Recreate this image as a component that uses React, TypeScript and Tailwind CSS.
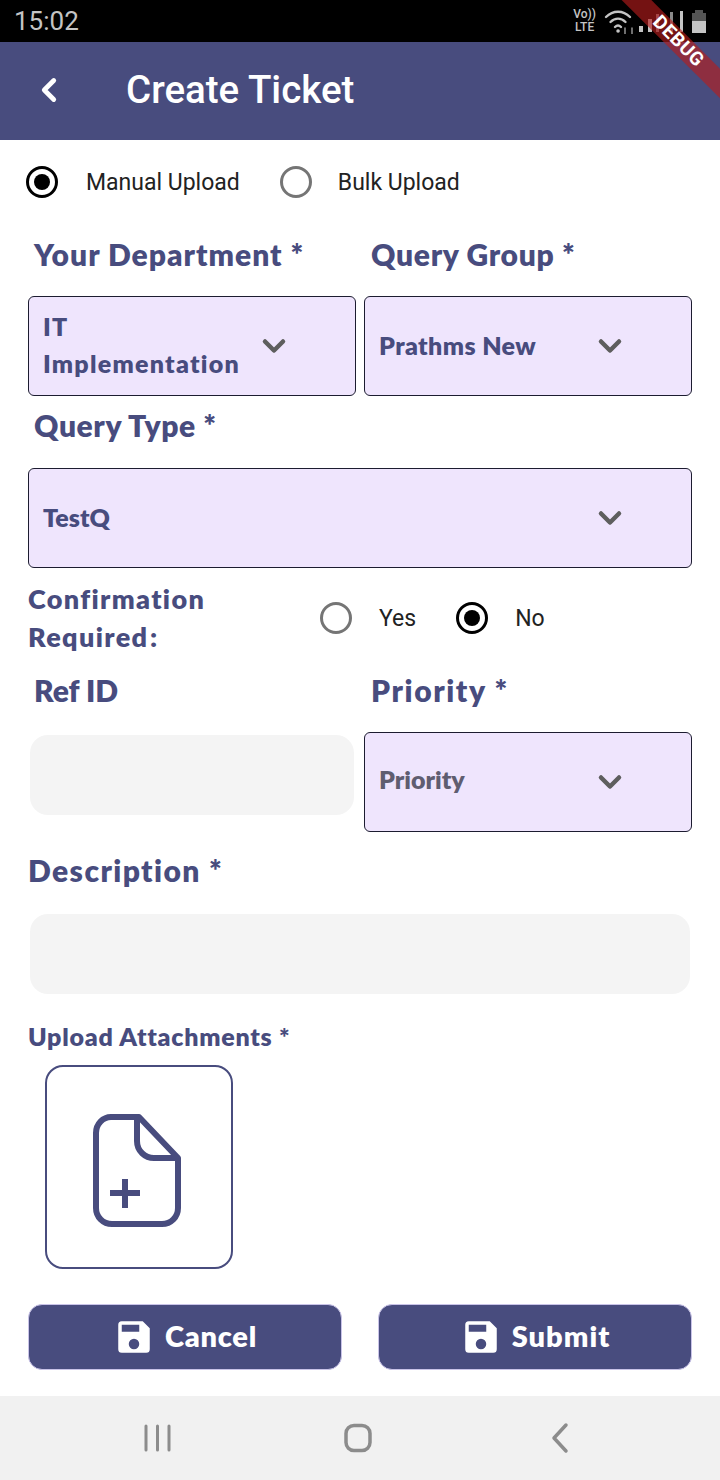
import { ChevronDown, ChevronLeft } from "lucide-react";

const brand = "#484c7e";

function Radio({ on }: { on?: boolean }) {
  return (
    <span
      className={`flex h-[32px] w-[32px] items-center justify-center rounded-full border-[3.5px] ${
        on ? "border-black" : "border-[#757575]"
      }`}
    >
      {on && <span className="h-[16px] w-[16px] rounded-full bg-black" />}
    </span>
  );
}

function Label({ text, className }: { text: string; className?: string }) {
  return <div className={`font-['Lato'] font-extrabold text-[#484c7e] ${className}`}>{text}</div>;
}

function Dropdown({
  lines,
  wide,
  muted,
  spacing,
}: {
  lines: string[];
  wide?: boolean;
  muted?: boolean;
  spacing?: string;
}) {
  return (
    <div
      className={`flex h-[100px] items-center rounded-[6px] border border-[#1c1c30] bg-[#efe5fd] pb-[2px] pl-[14px] pr-[65px] ${
        wide ? "w-[664px]" : "w-[328px]"
      }`}
    >
      <div
        className={`flex-1 font-['Lato'] text-[25px] font-extrabold leading-[37px] ${spacing} ${
          muted ? "mb-[3px] text-[#5f5d70]" : "text-[#484c7e]"
        }`}
      >
        {lines.map((l) => (
          <div key={l}>{l}</div>
        ))}
      </div>
      <ChevronDown className="mt-[2px] -mr-[2px] text-[#5e5e5e]" size={36} strokeWidth={3} />
    </div>
  );
}

function SaveIcon() {
  return (
    <svg width="42" height="42" viewBox="0 0 24 24" fill="#fff">
      <path d="M17 3H5a2 2 0 0 0-2 2v14a2 2 0 0 0 2 2h14a2 2 0 0 0 2-2V7l-4-4zm-5 16a3 3 0 1 1 0-6 3 3 0 0 1 0 6zm3-10H5V5h10v4z" />
    </svg>
  );
}

function ActionButton({ text, spacing }: { text: string; spacing: string }) {
  return (
    <button className="flex h-[66px] w-[314px] items-center justify-center gap-[10px] rounded-[14px] border border-[#c9c3e8] bg-[#484c7e]">
      <SaveIcon />
      <span className={`mb-[2px] font-['Lato'] text-[29px] font-extrabold text-white ${spacing}`}>{text}</span>
    </button>
  );
}

export default function App() {
  return (
    <div className="relative h-[1480px] w-[720px] overflow-hidden bg-white font-['Roboto',sans-serif]">
      {/* status bar */}
      <div className="flex h-[42px] items-center justify-between bg-black pl-[14px] pr-[13px]">
        <span className="text-[26px] leading-none text-[#c4c4c4]">15:02</span>
        <div className="flex items-center text-[#c4c4c4]">
          <div className="text-center text-[12px] font-medium leading-[13px]">
            Vo))
            <br />
            LTE
          </div>
          <svg className="ml-[8px]" width="32" height="26" viewBox="0 0 32 26" fill="none" stroke="#c4c4c4" strokeWidth="2.4" strokeLinecap="round">
            <path d="M2 9c7-7 17-7 24 0" />
            <path d="M6.500 14c4.500-4.500 10.500-4.500 15 0" />
            <path d="M11 19c2-2 4-2 6 0" />
            <path d="M14 23h.1" strokeWidth="3.500" />
            <path d="M21 20v6M28 26v-6" strokeWidth="1.600" stroke="#8a8a8a" />
          </svg>
          <svg className="ml-[3px]" width="46" height="22" viewBox="0 0 46 22" fill="#c4c4c4">
            <rect x="0" y="16" width="4" height="6" />
            <rect x="9" y="9" width="4" height="13" />
            <rect x="17" y="4" width="3" height="18" fill="#8a8a8a" />
            <rect x="31" y="2" width="3" height="20" fill="#8a8a8a" />
            <rect x="41" y="1" width="3" height="21" />
          </svg>
          <svg className="ml-[6px]" width="16" height="24" viewBox="0 0 16 24">
            <path d="M4 1h8v3h3v20H1V4h3z" fill="#555" />
            <rect x="1" y="12" width="14" height="12" fill="#c4c4c4" />
          </svg>
        </div>
      </div>

      {/* app bar */}
      <div className="flex h-[98px] items-center bg-[#484c7e] pb-[2px] pl-[30px] text-white">
        <ChevronLeft size={38} strokeWidth={3} />
        <span className="ml-[58px] text-[38.500px] font-medium leading-none">Create Ticket</span>
      </div>

      {/* debug ribbon */}
      <div className="absolute right-[-53px] top-[31px] flex h-[21px] w-[190px] rotate-45 items-center justify-center bg-[#b71c1c]/[0.63] text-[19px] font-bold tracking-wide text-white">
        DEBUG
      </div>

      {/* upload type */}
      <div className="flex h-[84px] items-center pl-[26px] text-[23px] text-[#222]">
        <Radio on />
        <span className="ml-[28px] mt-[2px]">Manual Upload</span>
        <span className="ml-[40px]">
          <Radio />
        </span>
        <span className="ml-[26px] mt-[2px]">Bulk Upload</span>
      </div>

      <div className="px-[28px]">
        <div className="flex h-[62px] items-center pb-[2px]">
          <Label text="Your Department *" className="ml-[6px] w-[337px] text-[30px] tracking-[1px]" />
          <Label text="Query Group *" className="text-[30px] tracking-[0.7px]" />
        </div>
        <div className="mt-[10px] flex gap-[8px]">
          <Dropdown spacing="tracking-[1.250px]" lines={["IT", "Implementation"]} />
          <Dropdown spacing="tracking-[0.400px]" lines={["Prathms New"]} />
        </div>

        <div className="flex h-[62px] items-center pb-[3px]">
          <Label text="Query Type *" className="ml-[6px] text-[30px] tracking-[0.600px]" />
        </div>
        <div className="mt-[10px]">
          <Dropdown wide lines={["TestQ"]} />
        </div>

        <div className="mt-[12px] flex h-[76px] items-center">
          <Label
            text="Confirmation Required :"
            className="w-[276px] text-[27px] leading-[38px] tracking-[1.350px] [word-spacing:-6px]"
          />
          <span className="ml-[16px]">
            <Radio />
          </span>
          <span className="ml-[27px] mt-[2px] text-[23px] text-[#222]">Yes</span>
          <span className="ml-[40px]">
            <Radio on />
          </span>
          <span className="ml-[27px] mt-[2px] text-[23px] text-[#222]">No</span>
        </div>

        <div className="flex h-[76px] items-center pb-[8px]">
          <Label text="Ref ID" className="ml-[6px] w-[337px] text-[30px]" />
          <Label text="Priority *" className="text-[30px] tracking-[1.600px]" />
        </div>
        <div className="flex items-start gap-[10px]">
          <div className="ml-[2px] mt-[3px] h-[80px] w-[324px] rounded-[18px] bg-[#f4f4f4]" />
          <Dropdown muted lines={["Priority"]} />
        </div>

        <div className="flex h-[78px] items-center pb-[2px]">
          <Label text="Description *" className="text-[30px] tracking-[1.400px]" />
        </div>
        <div className="mx-[2px] mt-[4px] h-[80px] rounded-[18px] bg-[#f4f4f4]" />

        <div className="mt-[27px] flex h-[32px] items-center">
          <Label text="Upload Attachments *" className="text-[25px] tracking-[0.750px]" />
        </div>
        <div className="ml-[17px] mt-[12px] flex h-[204px] w-[188px] items-start rounded-[18px] border-2 border-[#484c7e] pl-[44px] pt-[45px]">
          <svg width="92" height="116" viewBox="0 0 92 116" fill="none" stroke={brand} strokeWidth="6" strokeLinejoin="round">
            <path d="M20 5h28l39 41v50c0 9-7 16-16 16H21c-9 0-16-7-16-16V21C5 12 12 5 20 5z" />
            <path d="M46 5v24c0 10 8 17 17 17h24" />
            <path d="M34 67v29M19 81h30" />
          </svg>
        </div>

        <div className="mt-[35px] flex justify-between">
          <ActionButton text="Cancel" spacing="tracking-[0.7px]" />
          <ActionButton text="Submit" spacing="tracking-[1px]" />
        </div>
      </div>

      {/* nav bar */}
      <div className="mt-[26px] flex h-[84px] items-center bg-[#f1f1f1] text-[#8c8c8c]">
        <svg className="ml-[142px]" width="32" height="30" viewBox="0 0 32 30" fill="none" stroke="currentColor" strokeWidth="3" strokeLinecap="round">
          <path d="M4 3v24M15.500 3v24M27 3v24" />
        </svg>
        <svg className="ml-[169px]" width="30" height="30" viewBox="0 0 30 30" fill="none" stroke="currentColor" strokeWidth="3.500">
          <rect x="3" y="2.500" width="24" height="25" rx="8" />
        </svg>
        <svg className="ml-[176px]" width="22" height="32" viewBox="0 0 22 32" fill="none" stroke="currentColor" strokeWidth="3.500" strokeLinecap="round" strokeLinejoin="round">
          <path d="M17 3L5 16l12 13" />
        </svg>
      </div>
    </div>
  );
}
